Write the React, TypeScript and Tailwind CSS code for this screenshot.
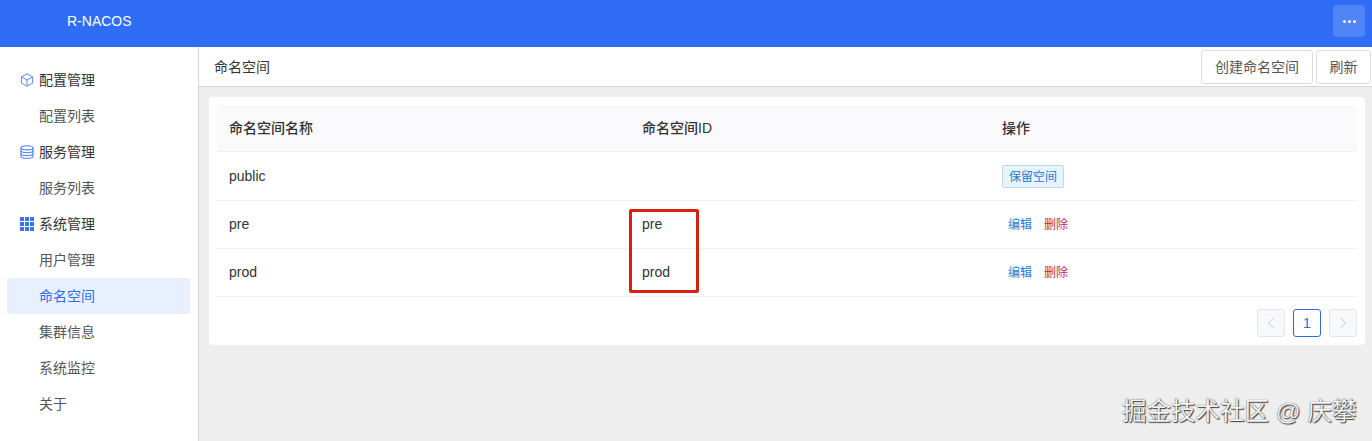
const font = "font-['Liberation_Sans','Noto_Sans_CJK_SC',sans-serif]";

function CubeIcon() {
  return (
    <svg width="14" height="14" viewBox="0 0 14 14" fill="none" stroke="#5b8def" strokeWidth="1" strokeLinejoin="round">
      <path d="M7 .8 12.6 3.9v6.2L7 13.2 1.4 10.1V3.9L7 .8Z" />
      <path d="M1.4 3.9 7 7l5.6-3.1M7 7v6.2" />
    </svg>
  );
}

function DbIcon() {
  return (
    <svg width="14" height="14" viewBox="0 0 14 14" fill="none" stroke="#4a80ee" strokeWidth="1.1">
      <ellipse cx="7" cy="2.8" rx="6" ry="2.1" />
      <path d="M1 2.8v8.4c0 1.2 2.7 2.1 6 2.1s6-.9 6-2.1V2.8" />
      <path d="M1 5.6c0 1.2 2.7 2.1 6 2.1s6-.9 6-2.1M1 8.4c0 1.2 2.7 2.1 6 2.1s6-.9 6-2.1" />
    </svg>
  );
}

function GridIcon() {
  return (
    <div className="grid h-[14px] w-[14px] grid-cols-3 gap-[1px]">
      {Array.from({ length: 9 }).map((_, i) => (
        <span key={i} className="bg-[#3a74ea]" />
      ))}
    </div>
  );
}

function GroupItem({ icon, label }: { icon: React.ReactNode; label: string }) {
  return (
    <div className="flex h-9 items-center pl-[13px] text-[14px] text-[#333]">
      <span className="mr-[5px] flex w-[14px] items-center justify-center">{icon}</span>
      {label}
    </div>
  );
}

function SubItem({ label, active }: { label: string; active?: boolean }) {
  return (
    <div
      className={
        active
          ? "flex h-9 items-center rounded-[2px] bg-[#e8f0fe] pl-[32px] text-[14px] text-[#2f6bea]"
          : "flex h-9 items-center pl-[32px] text-[14px] text-[#555]"
      }
    >
      {label}
    </div>
  );
}

function Row({ name, id, reserved }: { name: string; id?: string; reserved?: boolean }) {
  return (
    <div className={`flex items-center border-b border-[#f0f0f0] text-[14px] text-[#333] ${reserved ? "h-[49px]" : "h-[48px]"}`}>
      <div className="w-[413px] pl-3">{name}</div>
      <div className="w-[360px] pl-3">{id}</div>
      <div className="pl-3 pt-[1px]">
        {reserved ? (
          <span className="inline-flex h-[23px] w-[62px] items-center justify-center rounded-[2px] border border-[#b5d8f7] bg-[#e8f4fd] text-[12px] text-[#1f7ad1]">
            保留空间
          </span>
        ) : (
          <div className="flex gap-3 pl-[6px] text-[12px]">
            <span className="text-[#1f7ad1]">编辑</span>
            <span className="text-[#c41f50]">删除</span>
          </div>
        )}
      </div>
    </div>
  );
}

function Chevron({ dir }: { dir: "left" | "right" }) {
  return (
    <svg width="8" height="12" viewBox="0 0 8 12" fill="none" stroke="#c4c7cc" strokeWidth="1">
      <path d={dir === "left" ? "M6.5 1 1.5 6l5 5" : "M1.5 1l5 5-5 5"} />
    </svg>
  );
}

export default function App() {
  return (
    <div className={`relative flex h-[441px] w-[1372px] flex-col overflow-hidden bg-white ${font}`}>
      <header className="flex h-[47px] shrink-0 items-center justify-between bg-[#2f6df6] pl-[67px] pr-[7px]">
        <span className="mb-[5px] text-[14px] text-white">R-NACOS</span>
        <button className="mb-[5px] flex h-8 w-8 items-center justify-center rounded-[4px] bg-[#5085f7]">
          <span className="flex gap-[2px]">
            <span className="h-[3px] w-[3px] rounded-full bg-white" />
            <span className="h-[3px] w-[3px] rounded-full bg-white" />
            <span className="h-[3px] w-[3px] rounded-full bg-white" />
          </span>
        </button>
      </header>
      <div className="flex flex-1">
        <aside className="w-[199px] shrink-0 border-r border-[#d4d4d4] bg-white pl-[7px] pr-2 pt-[15px]">
          <GroupItem icon={<CubeIcon />} label="配置管理" />
          <SubItem label="配置列表" />
          <GroupItem icon={<DbIcon />} label="服务管理" />
          <SubItem label="服务列表" />
          <GroupItem icon={<GridIcon />} label="系统管理" />
          <SubItem label="用户管理" />
          <SubItem label="命名空间" active />
          <SubItem label="集群信息" />
          <SubItem label="系统监控" />
          <SubItem label="关于" />
        </aside>
        <main className="flex flex-1 flex-col bg-[#eeeeee]">
          <div className="flex h-[40px] shrink-0 items-center justify-between border-b border-[#d4d4d4] bg-white pl-[15px] pr-[1px] pt-[1px]">
            <span className="text-[14px] text-[#333]">命名空间</span>
            <div className="flex gap-[3px]">
              <button className="h-[34px] w-[112px] rounded-[3px] border border-[#dddddd] bg-white text-[14px] text-[#555]">
                创建命名空间
              </button>
              <button className="h-[34px] w-[55px] rounded-[3px] border border-[#dddddd] bg-white text-[14px] text-[#555]">
                刷新
              </button>
            </div>
          </div>
          <div className="ml-[10px] mt-[10px] h-[248px] w-[1156px] rounded-[4px] bg-white px-2 pt-2">
            <div className="flex h-[47px] items-center rounded-t-[4px] border-b border-[#f0f0f0] bg-[#fafafc] text-[14px] font-medium text-[#333]">
              <div className="w-[413px] pl-3">命名空间名称</div>
              <div className="w-[360px] pl-3">命名空间ID</div>
              <div className="pl-3">操作</div>
            </div>
            <Row name="public" reserved />
            <Row name="pre" id="pre" />
            <Row name="prod" id="prod" />
            <div className="flex justify-end gap-2 pt-3">
              <span className="flex h-7 w-7 items-center justify-center rounded-[3px] border border-[#e3e5e8] bg-[#f7f8f9]">
                <Chevron dir="left" />
              </span>
              <span className="flex h-7 w-7 items-center justify-center rounded-[3px] border border-[#2f6bd8] text-[14px] text-[#2f6bd8]">
                1
              </span>
              <span className="flex h-7 w-7 items-center justify-center rounded-[3px] border border-[#e3e5e8] bg-[#f7f8f9]">
                <Chevron dir="right" />
              </span>
            </div>
          </div>
        </main>
      </div>
      <div className="absolute left-[629px] top-[209px] h-[84px] w-[70px] rounded-[2px] border-[3px] border-[#d6210f]" />
      <div className="absolute left-[1122px] top-[397px] text-[24.5px] leading-[30px] whitespace-nowrap text-[#f4f4f4] [text-shadow:0_0_1px_#222,1px_1px_1px_#444]">
        掘金技术社区 @ 庆攀
      </div>
    </div>
  );
}
